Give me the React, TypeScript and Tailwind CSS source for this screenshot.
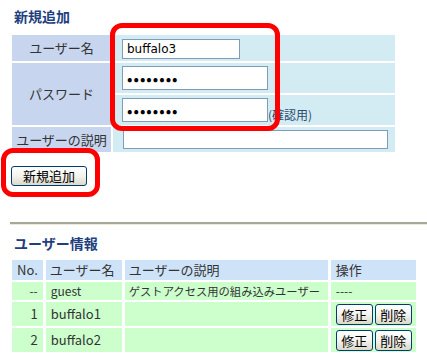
const jp = { fontFamily: '"Noto Sans CJK JP", "DejaVu Sans", sans-serif' };

const XpButton = ({ label, className }: { label: string; className: string }) => (
  <button
    className={`rounded-[3px] border border-[#003c74] bg-gradient-to-b from-white via-[#f4f3ee] to-[#dcd9c8] text-[13px] leading-none text-black ${className}`}
  >
    {label}
  </button>
);

const inputCls = "border border-[#7f9db9] bg-white px-1 text-[13px] text-black outline-none";

export default function App() {
  return (
    <div className="relative h-[364px] w-[427px] overflow-hidden bg-white text-[#333]" style={jp}>
      <div className="pl-[14px] pt-[7px] text-[14px] font-bold leading-[18px] text-[#1f3f80]">新規追加</div>

      <table className="ml-[10px] mt-[8px] w-[387px] border-separate [border-spacing:2px] text-[13px]">
        <tbody>
          <tr className="h-[26px]">
            <td className="w-[99px] bg-[#c7d5ef] text-center">ユーザー名</td>
            <td className="bg-[#d3ecf3] pl-[9px]">
              <input className={`${inputCls} h-[20px] w-[118px]`} defaultValue="buffalo3" style={{ fontFamily: '"DejaVu Sans", sans-serif', fontSize: 12 }} />
            </td>
          </tr>
          <tr className="h-[30px]">
            <td rowSpan={2} className="bg-[#c7d5ef] text-center">パスワード</td>
            <td className="bg-[#d3ecf3] pl-[9px]">
              <input type="password" className={`${inputCls} h-[24px] w-[146px] text-[16px] tracking-[1px]`} defaultValue="password" />
            </td>
          </tr>
          <tr className="h-[30px]">
            <td className="bg-[#d3ecf3] pl-[9px]">
              <div className="flex items-end">
                <input type="password" className={`${inputCls} h-[24px] w-[146px] text-[16px] tracking-[1px]`} defaultValue="password" />
                <span className="text-[12px] leading-[14px] text-[#2a4a6f]">(確認用)</span>
              </div>
            </td>
          </tr>
          <tr className="h-[25px]">
            <td className="whitespace-nowrap bg-[#c7d5ef] text-center">ユーザーの説明</td>
            <td className="bg-[#d3ecf3] pl-[10px]">
              <input className={`${inputCls} h-[19px] w-[265px]`} />
            </td>
          </tr>
        </tbody>
      </table>

      <div className="pl-[11px] pt-[8px]">
        <XpButton label="新規追加" className="h-[20px] w-[76px]" />
      </div>

      <div className="ml-[10px] mt-[36px] h-[3px] border-t-2 border-b border-t-[#a8a898] border-b-[#ece9d8]" />

      <div className="pl-[14px] pt-[9px] text-[14px] font-bold leading-[18px] text-[#1f3f80]">ユーザー情報</div>

      <table className="ml-[9px] mt-[6px] w-[410px] border-separate [border-spacing:3px_2px] text-[13px]">
        <thead>
          <tr className="h-[20px] bg-[#cfe3f8] text-left font-normal">
            <th className="w-[28px] px-[5px] font-normal">No.</th>
            <th className="w-[76px] px-[4px] font-normal">ユーザー名</th>
            <th className="w-[203px] px-[4px] font-normal">ユーザーの説明</th>
            <th className="px-[5px] font-normal">操作</th>
          </tr>
        </thead>
        <tbody>
          <tr className="h-[18px] bg-[#ccffcc] text-[12px]">
            <td className="pr-[5px] text-right">--</td>
            <td className="px-[5px]">guest</td>
            <td className="whitespace-nowrap px-[4px] text-[11.3px]">ゲストアクセス用の組み込みユーザー</td>
            <td className="px-[5px]">----</td>
          </tr>
          {["buffalo1", "buffalo2"].map((u, i) => (
            <tr key={u} className="h-[24px] bg-[#ccffcc]">
              <td className="pr-[5px] text-right">{i + 1}</td>
              <td className="px-[5px]">{u}</td>
              <td />
              <td className="pl-[5px]">
                <div className="flex gap-[2px]">
                  <XpButton label="修正" className="h-[21px] w-[37px]" />
                  <XpButton label="削除" className="h-[21px] w-[37px]" />
                </div>
              </td>
            </tr>
          ))}
        </tbody>
      </table>

      <div className="absolute left-[110px] top-[23px] h-[108px] w-[170px] rounded-[12px] border-[5px] border-[#ff0000]" />
      <div className="absolute left-[1px] top-[148px] h-[49px] w-[99px] rounded-[12px] border-[5px] border-[#ff0000]" />
    </div>
  );
}
